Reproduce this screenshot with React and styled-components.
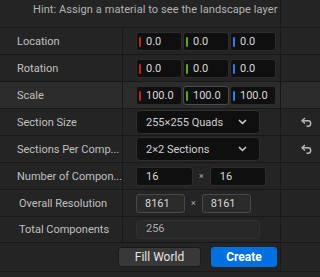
import styled, { createGlobalStyle } from 'styled-components'

const GlobalStyle = createGlobalStyle`
  html, body {
    margin: 0;
    padding: 0;
    background: #242424;
  }
  body {
    font-family: Roboto, "Noto Sans", sans-serif;
    font-size: 11px;
    color: #c0c0c0;
  }
`

const Panel = styled.div`
  width: 320px;
  height: 277px;
  background: #242424;
  display: flex;
  flex-direction: column;
  overflow: hidden;
`

const Row = styled.div`
  display: grid;
  grid-template-columns: 123px 158px 39px;
  height: ${p => p.$h || 27}px;
  background: ${p => (p.$hover ? '#2c2c2c' : '#242424')};
  border-bottom: 1px solid #181818;
  box-sizing: border-box;
`

const HintCell = styled.div`
  grid-column: 1 / 3;
  display: flex;
  align-items: center;
  padding-left: 33px;
  padding-bottom: 9px;
  white-space: nowrap;
  overflow: hidden;
  color: #b4b4b4;
  font-size: 11px;
  letter-spacing: 0.08px;
  border-right: 1px solid #181818;
`

const Label = styled.div`
  display: flex;
  align-items: center;
  padding-left: ${p => p.$indent || 17}px;
  border-right: 1px solid #181818;
  white-space: nowrap;
  overflow: hidden;
`

const Value = styled.div`
  display: flex;
  align-items: center;
  gap: ${p => p.$gap || 2}px;
  padding-left: 13px;
  border-right: 1px solid #181818;
`

const Extra = styled.div`
  display: flex;
  align-items: center;
  justify-content: center;
  padding-left: 12px;
`

const VecBox = styled.div`
  position: relative;
  width: 46px;
  height: 19px;
  box-sizing: border-box;
  background: #0f0f0f;
  border: 1px solid ${p => (p.$active ? '#4a4a4a' : '#2c2c2c')};
  border-radius: 3px;
  display: flex;
  align-items: center;
  padding-left: 9px;
  color: #d8d8d8;
  font-size: 11px;
`

const Bar = styled.span`
  position: absolute;
  left: 2px;
  top: 4px;
  width: 2px;
  height: 10px;
  border-radius: 1px;
  background: ${p => p.$c};
`

const Dropdown = styled.div`
  width: 124px;
  height: 24px;
  box-sizing: border-box;
  background: #0f0f0f;
  border: 1px solid #2e2e2e;
  border-radius: 4px;
  display: flex;
  align-items: center;
  justify-content: space-between;
  padding: 0 12px 0 9px;
  color: #d0d0d0;
`

const NumBox = styled.div`
  width: ${p => p.$w}px;
  height: 19px;
  box-sizing: border-box;
  background: ${p => (p.$ro ? '#2a2a2a' : '#0f0f0f')};
  border: 1px solid ${p => (p.$ro ? '#484848' : '#2c2c2c')};
  border-radius: 3px;
  display: flex;
  align-items: center;
  padding-left: ${p => (p.$ro ? 8 : 9)}px;
  color: #d8d8d8;
`

const Times = styled.span`
  font-size: 9px;
  color: #aaa;
  padding: 0 4px;
`

const TotalBox = styled.div`
  width: 124px;
  height: 19px;
  box-sizing: border-box;
  background: #282828;
  border: 1px solid #303030;
  border-radius: 4px;
  display: flex;
  align-items: center;
  padding-left: 9px;
  padding-bottom: 3px;
  color: #a8a8a8;
`

const ButtonRow = styled.div`
  display: grid;
  grid-template-columns: 281px 39px;
  height: 29px;
  border-bottom: 1px solid #181818;
  box-sizing: border-box;
`

const ButtonCell = styled.div`
  display: flex;
  align-items: center;
  gap: 10px;
  padding-left: 118px;
  border-right: 1px solid #181818;
`

const Button = styled.button`
  height: 20px;
  width: ${p => p.$w}px;
  box-sizing: border-box;
  border-radius: 3px;
  font-family: Roboto, "Noto Sans", sans-serif;
  font-size: 12px;
  font-weight: ${p => (p.$primary ? 700 : 400)};
  color: ${p => (p.$primary ? '#ffffff' : '#e4e4e4')};
  background: ${p => (p.$primary ? '#0070e0' : '#383838')};
  border: 1px solid ${p => (p.$primary ? '#0070e0' : '#1a1a1a')};
  padding: 0;
`

const Chevron = () => (
  <svg width="9" height="6" viewBox="0 0 9 6">
    <path d="M1 1l3.5 3.5L8 1" fill="none" stroke="#d0d0d0" strokeWidth="1.5" />
  </svg>
)

const ResetIcon = () => (
  <svg width="11" height="10" viewBox="0 0 11 10">
    <path d="M4 1L1 3.8 4 6.6" fill="none" stroke="#b8b8b8" strokeWidth="1.4" />
    <path d="M1.5 3.8h5.5a2.7 2.7 0 010 5.4H5.5" fill="none" stroke="#b8b8b8" strokeWidth="1.4" />
  </svg>
)

const Vec = ({ vals, activeIndex }) => {
  const colors = ['#c4260c', '#6aa10c', '#2c7ce6']
  return (
    <Value $gap={1}>
      {vals.map((v, i) => (
        <VecBox key={i} $active={i === activeIndex}>
          <Bar $c={colors[i]} />
          {v}
        </VecBox>
      ))}
    </Value>
  )
}

export default function App() {
  return (
    <Panel>
      <GlobalStyle />
      <Row $h={28}>
        <HintCell>Hint: Assign a material to see the landscape layer</HintCell>
        <Extra />
      </Row>
      <Row>
        <Label>Location</Label>
        <Vec vals={['0.0', '0.0', '0.0']} />
        <Extra />
      </Row>
      <Row>
        <Label>Rotation</Label>
        <Vec vals={['0.0', '0.0', '0.0']} />
        <Extra />
      </Row>
      <Row $hover>
        <Label>Scale</Label>
        <Vec vals={['100.0', '100.0', '100.0']} activeIndex={1} />
        <Extra />
      </Row>
      <Row>
        <Label>Section Size</Label>
        <Value>
          <Dropdown>255×255 Quads<Chevron /></Dropdown>
        </Value>
        <Extra><ResetIcon /></Extra>
      </Row>
      <Row>
        <Label>Sections Per Comp...</Label>
        <Value>
          <Dropdown>2×2 Sections<Chevron /></Dropdown>
        </Value>
        <Extra><ResetIcon /></Extra>
      </Row>
      <Row>
        <Label>Number of Compon...</Label>
        <Value $gap={0}>
          <NumBox $w={57}>16</NumBox>
          <Times>×</Times>
          <NumBox $w={56}>16</NumBox>
        </Value>
        <Extra />
      </Row>
      <Row>
        <Label $indent={19}>Overall Resolution</Label>
        <Value $gap={0}>
          <NumBox $w={49} $ro>8161</NumBox>
          <Times>×</Times>
          <NumBox $w={49} $ro>8161</NumBox>
        </Value>
        <Extra />
      </Row>
      <Row $h={26}>
        <Label $indent={19}>Total Components</Label>
        <Value>
          <TotalBox>256</TotalBox>
        </Value>
        <Extra />
      </Row>
      <ButtonRow>
        <ButtonCell>
          <Button $w={83}>Fill World</Button>
          <Button $w={66} $primary>Create</Button>
        </ButtonCell>
        <div />
      </ButtonRow>
    </Panel>
  )
}
